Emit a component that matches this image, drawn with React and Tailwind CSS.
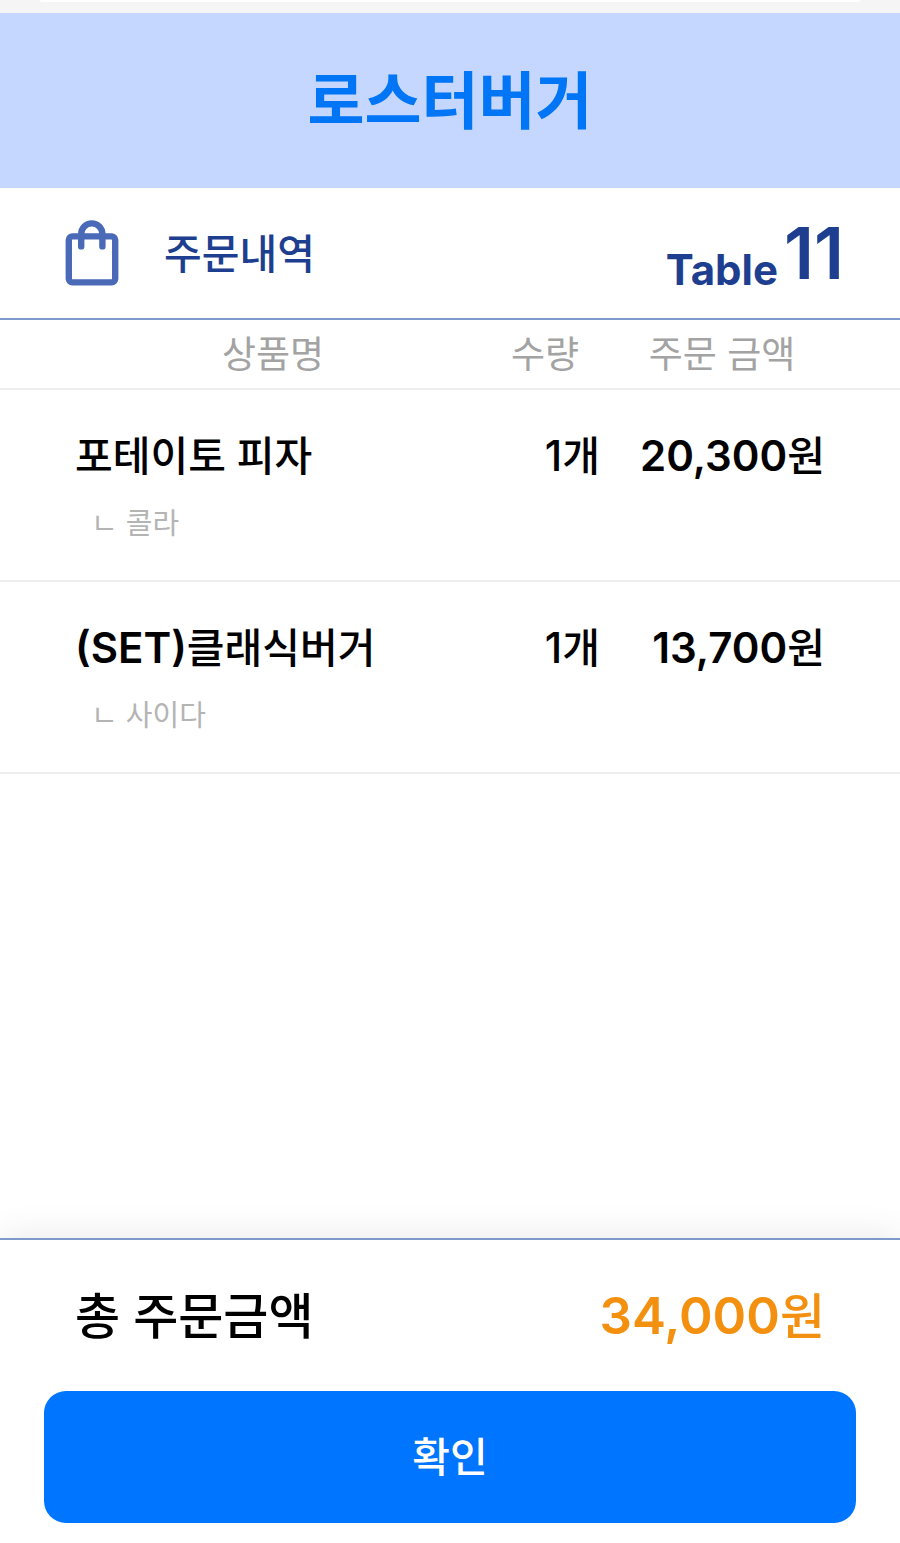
/**
 * Order receipt screen: store banner, table number, ordered items and the
 * total with a confirm button pinned to the bottom of the page.
 */

const STORE_NAME = '로스터버거';
const TABLE_NUMBER = 11;

const ITEMS = [
  { id: 1, prefix: '', name: '포테이토 피자', option: '콜라', count: 1, price: 20300 },
  { id: 2, prefix: '(SET)', name: '클래식버거', option: '사이다', count: 1, price: 13700 },
];

function formatPrice(value) {
  return value.toLocaleString('en-US');
}

function BagIcon() {
  return (
    <svg
      viewBox="0 0 54 66"
      className="w-[54px] h-[66px] shrink-0"
      fill="none"
      stroke="#4a6ab8"
      strokeWidth="6.4"
      strokeLinecap="round"
      aria-hidden="true"
    >
      <rect x="3.8" y="16.4" width="46.4" height="46" rx="3.6" />
      <path d="M16.2 26.4V14a10.6 10.6 0 0 1 21.2 0v12.4" />
    </svg>
  );
}

function OrderRow({ item }) {
  return (
    <tr className="border-b-2 border-[#eeeeee] align-top text-[41px] leading-[64px] font-medium">
      <td className="pt-[34px] pb-5 pl-[75px]">
        <p>
          {item.prefix && <span className="text-[42px] font-semibold">{item.prefix}</span>}
          {item.name}
        </p>
        <p className="pl-4 text-[29px] leading-[72px] font-normal text-[#b4b4b4]">
          ㄴ {item.option}
        </p>
      </td>
      <td className="pt-[34px] pr-[19px] text-right">
        <span className="text-[42px]">{item.count}</span>개
      </td>
      <td className="pt-[34px] pr-[75px] text-right whitespace-nowrap">
        <span className="text-[42px] font-semibold">{formatPrice(item.price)}</span>원
      </td>
    </tr>
  );
}

export default function App() {
  const total = ITEMS.reduce((sum, item) => sum + item.price * item.count, 0);

  return (
    <div className="min-h-screen flex flex-col bg-white text-black font-['Inter','Noto_Sans_CJK_KR',sans-serif]">
      {/* Bottom edge of the sheet above */}
      <div className="h-[13px] bg-[#f5f5f5] px-10">
        <div className="h-[2px] rounded-b-full bg-white" />
      </div>

      <header className="h-[175px] flex items-center justify-center bg-[#c6d7ff] pt-0.5">
        <h1 className="text-[62px] leading-[80px] font-bold text-[#0075f6]">{STORE_NAME}</h1>
      </header>

      {/* Title and table number */}
      <section className="h-[132px] flex items-center justify-between border-b-2 border-[#7f9aca] pl-[65px] pr-14 text-[#1e3f8f]">
        <div className="flex items-center gap-[45px]">
          <BagIcon />
          <h2 className="pt-0.5 text-[41px] leading-[64px] font-medium">주문내역</h2>
        </div>
        <p className="flex items-end gap-1.5">
          <span className="text-[42px] leading-[46px] font-bold">Table</span>
          <span className="text-[71px] leading-[80px] font-semibold">{TABLE_NUMBER}</span>
        </p>
      </section>

      <table className="w-full table-fixed">
        <colgroup>
          <col />
          <col className="w-[148px]" />
          <col className="w-[281px]" />
        </colgroup>
        <thead>
          <tr className="h-[69px] border-b-2 border-[#eeeeee] text-[37px] leading-[64px] text-[#a3a3a3]">
            <th scope="col" className="pt-0.5 pl-[75px] font-normal">상품명</th>
            <th scope="col" className="pt-0.5 font-normal">수량</th>
            <th scope="col" className="pt-0.5 pr-[75px] font-normal whitespace-nowrap">주문 금액</th>
          </tr>
        </thead>
        <tbody>
          {ITEMS.map((item) => (
            <OrderRow key={item.id} item={item} />
          ))}
        </tbody>
      </table>

      {/* Total and confirm */}
      <footer className="mt-auto border-t-2 border-[#7f9aca] bg-white px-11 pb-5 shadow-[0_-4px_32px_rgba(0,0,0,0.08)]">
        <div className="h-[151px] flex items-center justify-between px-[31px] pt-0.5 text-[49px] leading-[64px] font-medium">
          <span>총 주문금액</span>
          <span className="text-[#f39010]">
            <span className="text-[51px] font-semibold">{formatPrice(total)}</span>원
          </span>
        </div>
        <button
          type="button"
          className="w-full h-[132px] rounded-[22px] bg-[#0075ff] text-[41px] leading-[64px] font-medium text-white"
        >
          확인
        </button>
      </footer>
    </div>
  );
}
